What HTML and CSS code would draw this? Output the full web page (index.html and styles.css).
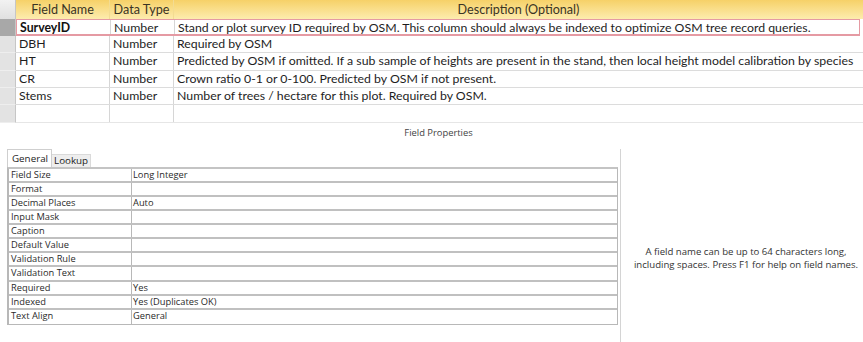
FILE: index.html
```html
<!DOCTYPE html>
<html>
<head>
<meta charset="utf-8">
<link rel="stylesheet" href="styles.css">
</head>
<body>
<div class="design">
  <div class="grid">
    <div class="row head">
      <div class="sel corner"></div>
      <div class="cells">
        <div class="c name center">Field Name</div>
        <div class="c type center">Data Type</div>
        <div class="c desc center">Description (Optional)</div>
      </div>
    </div>
    <div class="row current">
      <div class="sel active"></div>
      <div class="cells">
        <div class="c name">SurveyID</div>
        <div class="c type">Number</div>
        <div class="c desc">Stand or plot survey ID required by OSM. This column should always be indexed to optimize OSM tree record queries.</div>
      </div>
    </div>
    <div class="row">
      <div class="sel"></div>
      <div class="cells">
        <div class="c name">DBH</div>
        <div class="c type">Number</div>
        <div class="c desc">Required by OSM</div>
      </div>
    </div>
    <div class="row">
      <div class="sel"></div>
      <div class="cells">
        <div class="c name">HT</div>
        <div class="c type">Number</div>
        <div class="c desc">Predicted by OSM if omitted. If a sub sample of heights are present in the stand, then local height model calibration by species</div>
      </div>
    </div>
    <div class="row">
      <div class="sel"></div>
      <div class="cells">
        <div class="c name">CR</div>
        <div class="c type">Number</div>
        <div class="c desc">Crown ratio 0-1 or 0-100. Predicted by OSM if not present.</div>
      </div>
    </div>
    <div class="row">
      <div class="sel"></div>
      <div class="cells">
        <div class="c name">Stems</div>
        <div class="c type">Number</div>
        <div class="c desc">Number of trees / hectare for this plot. Required by OSM.</div>
      </div>
    </div>
    <div class="row last">
      <div class="sel"></div>
      <div class="cells">
        <div class="c name"></div>
        <div class="c type"></div>
        <div class="c desc"></div>
      </div>
    </div>
  </div>

  <div class="fp-title">Field Properties</div>

  <div class="props">
    <div class="left">
      <div class="tabs">
        <div class="tab on">General</div>
        <div class="tab">Lookup</div>
      </div>
      <div class="plist">
        <div class="prow"><div class="pl">Field Size</div><div class="pv">Long Integer</div></div>
        <div class="prow"><div class="pl">Format</div><div class="pv"></div></div>
        <div class="prow"><div class="pl">Decimal Places</div><div class="pv">Auto</div></div>
        <div class="prow"><div class="pl">Input Mask</div><div class="pv"></div></div>
        <div class="prow"><div class="pl">Caption</div><div class="pv"></div></div>
        <div class="prow"><div class="pl">Default Value</div><div class="pv"></div></div>
        <div class="prow"><div class="pl">Validation Rule</div><div class="pv"></div></div>
        <div class="prow"><div class="pl">Validation Text</div><div class="pv"></div></div>
        <div class="prow"><div class="pl">Required</div><div class="pv">Yes</div></div>
        <div class="prow"><div class="pl">Indexed</div><div class="pv">Yes (Duplicates OK)</div></div>
        <div class="prow"><div class="pl">Text Align</div><div class="pv">General</div></div>
      </div>
    </div>
    <div class="help">A field name can be up to 64 characters long,<br>including spaces. Press F1 for help on field names.</div>
  </div>
</div>
</body>
</html>
```

FILE: styles.css
```css
* { box-sizing: border-box; }
html, body { margin: 0; padding: 0; background: #fff; }
body { width: 863px; height: 342px; overflow: hidden; font-family: Lato, "Liberation Sans", sans-serif; }

.design { display: flex; flex-direction: column; }

.grid { display: flex; flex-direction: column; }
.row { display: flex; height: 17.3px; }
.cells { flex: 1; display: flex; border-bottom: 1px solid #dcdcdc; }
.row.head { height: 19px; }
.row.head .cells { background: linear-gradient(#f6d168, #fdecae); border-bottom: none; }
.row.current { height: 17px; }
.row.current .cells { border: 1px solid #e59aa3; border-bottom-width: 2px; margin-right: 3px; }
.row.current .c.desc { border-right: none; }
.row.last { height: 17.6px; }
.row.last .cells { border-bottom-color: #e6e6e6; }

.sel { width: 16px; flex: none; background: #e3e3e3; border-right: 1px solid #c6c6c6; border-bottom: 1px solid #eeeeee; }
.sel.corner { background: linear-gradient(#f2f2f2, #e0e0e0); border-bottom: none; }
.sel.active { background: #a8a8a8; border-bottom-color: #a8a8a8; }

.c { font-size: 12.3px; line-height: 16px; color: #1e1e1e; padding-left: 3px; white-space: nowrap; overflow: hidden; border-right: 1px solid #d6d6d6; }
.head .c { color: #3a3424; line-height: 19px; font-size: 12.6px; border-right: 1px solid #f3dc92; }
.c.center { text-align: center; padding-left: 0; }
.c.name { width: 94px; flex: none; }
.c.type { width: 64px; flex: none; }
.c.desc { flex: 1; border-right: none; }
.current .c { line-height: 15px; }
.current .c.name { font-weight: bold; color: #111; }

.fp-title { font-family: "Open Sans", sans-serif; font-size: 9.4px; color: #444; text-align: center; margin-top: 3px; padding-left: 14px; height: 23px; }

.props { display: flex; height: 200px; }
.left { width: 621px; flex: none; border-right: 1px solid #d4d4d4; padding-left: 7px; }
.tabs { display: flex; height: 18px; align-items: flex-end; }
.tab { font-family: "Open Sans", sans-serif; font-size: 9.8px; color: #222; height: 13px; line-height: 12px; padding: 0 2px 0 2px; border: 1px solid #dadada; border-bottom: none; border-left: none; background: #eeeeee; }
.tab.on { height: 18px; background: #fff; line-height: 17px; padding: 0 3px 0 4px; border-left: 1px solid #cfcfcf; border-color: #cfcfcf; }

.plist { width: 611px; border: 1px solid #b8b8b8; border-left: 2px solid #b8b8b8; border-top: 2px solid #c4c4c4; }
.prow { display: flex; height: 14.1px; border-bottom: 2px solid #c0c0c0; }
.prow:last-child { border-bottom: none; }
.pl, .pv { font-family: "Open Sans", sans-serif; font-size: 9.3px; line-height: 12px; color: #2a2a2a; padding-left: 2px; white-space: nowrap; }
.pl { width: 123px; flex: none; border-right: 1px solid #b8b8b8; }
.pv { flex: 1; padding-left: 1px; }

.help { flex: 1; font-family: "Open Sans", sans-serif; font-size: 9.6px; color: #333; line-height: 13.5px; text-align: center; padding-top: 96px; padding-left: 8px; }
```
